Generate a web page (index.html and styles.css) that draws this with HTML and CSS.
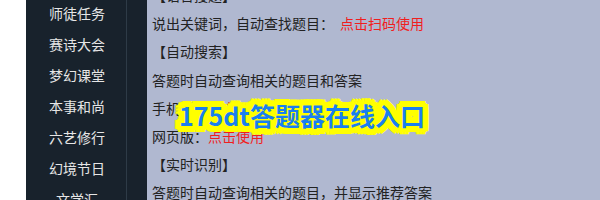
FILE: index.html
```html
<!DOCTYPE html>
<html lang="zh">
<head>
<meta charset="utf-8">
<link rel="stylesheet" href="styles.css">
</head>
<body>
<div class="page">
  <div class="gutter"></div>
  <nav class="sidebar">
    <div class="nav-item">师徒任务</div>
    <div class="nav-item">赛诗大会</div>
    <div class="nav-item">梦幻课堂</div>
    <div class="nav-item">本事和尚</div>
    <div class="nav-item">六艺修行</div>
    <div class="nav-item">幻境节日</div>
    <div class="nav-item">文学汇</div>
  </nav>
  <div class="gap"></div>
  <main class="content">
    <div class="lines">
      <p>【语音搜题】</p>
      <p>说出关键词，自动查找题目：<span class="link">点击扫码使用</span></p>
      <p>【自动搜索】</p>
      <p>答题时自动查询相关的题目和答案</p>
      <p>手机版：<span class="link">点击扫码使用</span></p>
      <p>网页版：<span class="link">点击使用</span></p>
      <p>【实时识别】</p>
      <p>答题时自动查询相关的题目，并显示推荐答案</p>
    </div>
  </main>
  <div class="banner">175dt答题器在线入口</div>
</div>
</body>
</html>
```
FILE: styles.css
```css
html, body {
  margin: 0;
  padding: 0;
}
body {
  font-family: "Noto Sans CJK SC", "Liberation Sans", sans-serif;
  background: #ffffff;
}
.page {
  position: relative;
  display: flex;
  width: 600px;
  height: 200px;
  overflow: hidden;
}
.gutter {
  width: 26px;
  flex: none;
  background: #ffffff;
}
.sidebar {
  width: 100px;
  flex: none;
  background: #18222c;
  border-right: 1px solid #2e3b47;
  display: flex;
  flex-direction: column;
  align-items: center;
  padding-top: 0;
  margin-top: -2px;
}
.nav-item {
  height: 31px;
  line-height: 31px;
  font-size: 14px;
  color: #e6e6e6;
  padding-left: 2px;
}
.gap {
  width: 20px;
  flex: none;
  background: #18222c;
}
.content {
  flex: 1;
  background: #b0b8d0;
  padding-left: 5px;
}
.lines {
  margin-top: -19px;
}
.lines p {
  margin: 0;
  height: 28.2px;
  line-height: 28px;
  font-size: 14px;
  color: #222222;
  white-space: nowrap;
}
.link {
  color: #f01e1e;
  margin-left: 6px;
}
.lines p:nth-child(5) .link,
.lines p:nth-child(6) .link {
  margin-left: 0;
}
.banner {
  position: absolute;
  left: 179px;
  top: 97px;
  font-size: 25px;
  font-weight: 700;
  line-height: 36px;
  color: #1a7ff0;
  white-space: nowrap;
  text-shadow:
    6px 0 0 #ffff00, -6px 0 0 #ffff00, 0 6px 0 #ffff00, 0 -6px 0 #ffff00,
    4px 4px 0 #ffff00, -4px 4px 0 #ffff00, 4px -4px 0 #ffff00, -4px -4px 0 #ffff00,
    6px 3px 0 #ffff00, -6px 3px 0 #ffff00, 6px -3px 0 #ffff00, -6px -3px 0 #ffff00,
    3px 6px 0 #ffff00, -3px 6px 0 #ffff00, 3px -6px 0 #ffff00, -3px -6px 0 #ffff00;
}
```
